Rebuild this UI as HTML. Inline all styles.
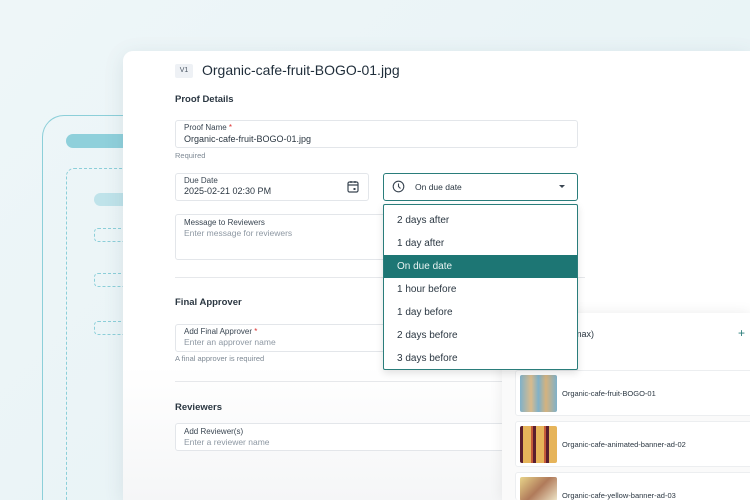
<!DOCTYPE html>
<html style="width:750px;height:500px;overflow:hidden"><head><style>
*{margin:0;padding:0;box-sizing:border-box}
body{width:750px;height:500px;overflow:hidden;position:relative;font-family:"Liberation Sans",sans-serif;background:linear-gradient(135deg,#eef6f8,#e6f2f5);color:#1f2d3a}
.a{position:absolute}
.card{left:123px;top:51px;width:627px;height:449px;background:linear-gradient(#fff 70%,#f5f6f7);border-radius:10px 0 0 0;box-shadow:0 4px 20px rgba(60,90,110,.12)}
.f{position:absolute;border:1px solid #e3e6ea;border-radius:3px;background:#fff}
.lb{position:absolute;font-size:8px;color:#3a4652}
.v{position:absolute;font-size:9px;color:#2b3742}
.ph{position:absolute;font-size:9px;color:#8e98a3}
.h{position:absolute;font-size:10.5px;font-weight:bold;color:#2b3742}
.hint{position:absolute;font-size:7.5px;color:#7f8a95}
.req{color:#d33}
.dd div{height:23px;line-height:23px;padding-left:13px;font-size:10px;color:#2b3742}
.row{position:absolute;left:515px;width:240px;height:46px;border:1px solid #eceef0;border-radius:3px;background:#fff}
.row .t{position:absolute;left:4px;top:4px;width:37px;height:37px;border-radius:2px}
.row span{position:absolute;left:46px;top:18px;font-size:7.5px;color:#2b3742}
</style></head><body>
<div class="a" style="left:42px;top:115px;width:200px;height:385px;border:1px solid #8ccfd9;border-bottom:none;border-radius:22px 22px 0 0"></div>
<div class="a" style="left:66px;top:134px;width:80px;height:14px;background:#8fd0db;border-radius:7px"></div>
<div class="a" style="left:66px;top:168px;width:100px;height:332px;border:1px dashed #8ccfd9;border-bottom:none;border-radius:8px 8px 0 0"></div>
<div class="a" style="left:94px;top:193px;width:60px;height:13px;background:#bfe3ea;border-radius:7px"></div>
<div class="a" style="left:94px;top:228px;width:40px;height:14px;border:1px dashed #8ccfd9;border-radius:4px"></div>
<div class="a" style="left:94px;top:273px;width:40px;height:14px;border:1px dashed #8ccfd9;border-radius:4px"></div>
<div class="a" style="left:94px;top:321px;width:40px;height:14px;border:1px dashed #8ccfd9;border-radius:4px"></div>

<div class="a card"></div>
<div class="a" style="left:175px;top:64px;width:18px;height:14px;background:#eef1f5;border-radius:2px;font-size:7px;line-height:14px;text-align:center;color:#4a5663">V1</div>
<div class="a" style="left:202px;top:62px;font-size:14px;color:#1f2d3a">Organic-cafe-fruit-BOGO-01.jpg</div>
<div class="h" style="left:175px;top:94px;font-size:9.5px">Proof Details</div>

<div class="f" style="left:175px;top:120px;width:403px;height:28px"></div>
<div class="lb" style="left:184px;top:123px">Proof Name <span class="req">*</span></div>
<div class="v" style="left:184px;top:134px">Organic-cafe-fruit-BOGO-01.jpg</div>
<div class="hint" style="left:175px;top:151px">Required</div>

<div class="f" style="left:175px;top:173px;width:194px;height:28px"></div>
<div class="lb" style="left:184px;top:176px">Due Date</div>
<div class="v" style="left:184px;top:186px">2025-02-21 02:30 PM</div>
<svg class="a" style="left:347px;top:180px" width="12" height="13" viewBox="0 0 12 13"><rect x="1" y="2" width="10" height="10" rx="1.5" fill="none" stroke="#3a4652" stroke-width="1.2"/><path d="M1 5h10M4 1v2M8 1v2" stroke="#3a4652" stroke-width="1.2"/><rect x="6.5" y="8" width="2" height="2" fill="#3a4652"/></svg>

<div class="f" style="left:383px;top:173px;width:195px;height:28px;border:1.5px solid #2a7d7b"></div>
<svg class="a" style="left:392px;top:180px" width="13" height="13" viewBox="0 0 13 13"><circle cx="6.5" cy="6.5" r="5.3" fill="none" stroke="#3a4652" stroke-width="1.1"/><path d="M6.5 3.5v3l2 2" fill="none" stroke="#3a4652" stroke-width="1.1"/></svg>
<div class="v" style="left:415px;top:182px;font-size:8.5px">On due date</div>
<div class="a" style="left:559px;top:185px;border-left:3px solid transparent;border-right:3px solid transparent;border-top:3px solid #3a4652"></div>

<div class="f" style="left:175px;top:214px;width:220px;height:46px"></div>
<div class="lb" style="left:184px;top:218px">Message to Reviewers</div>
<div class="ph" style="left:184px;top:228px;font-size:8.5px">Enter message for reviewers</div>

<div class="a" style="left:175px;top:277px;width:410px;height:1px;background:#e6e8eb"></div>
<div class="h" style="left:175px;top:297px;font-size:9.5px">Final Approver</div>
<div class="f" style="left:175px;top:324px;width:220px;height:28px"></div>
<div class="lb" style="left:184px;top:327px">Add Final Approver <span class="req">*</span></div>
<div class="ph" style="left:184px;top:337px;font-size:8.5px">Enter an approver name</div>
<div class="hint" style="left:175px;top:354px">A final approver is required</div>
<div class="a" style="left:175px;top:381px;width:340px;height:1px;background:#e6e8eb"></div>
<div class="h" style="left:175px;top:402px;font-size:9.5px">Reviewers</div>
<div class="f" style="left:175px;top:423px;width:340px;height:28px"></div>
<div class="lb" style="left:184px;top:427px">Add Reviewer(s)</div>
<div class="ph" style="left:184px;top:437px;font-size:8.5px">Enter a reviewer name</div>

<div class="a" style="left:502px;top:313px;width:248px;height:187px;background:#fafafa;box-shadow:0 0 14px rgba(0,0,0,.08);border-radius:4px 0 0 0"></div>
<div class="a" style="left:514px;top:313px;width:236px;height:57px;background:#fff"></div>
<div class="a" style="left:574px;top:329px;font-size:9px;color:#2b3742">max)</div>
<div class="a" style="left:738px;top:326px;font-size:12px;color:#2a7d7b">+</div>
<div class="row" style="top:370px"><div class="t" style="background:linear-gradient(90deg,#7fb1c9,#d9bb8c 30%,#7fb1c9 50%,#d5b27e 70%,#7fb1c9)"></div><span>Organic-cafe-fruit-BOGO-01</span></div>
<div class="row" style="top:421px"><div class="t" style="background:repeating-linear-gradient(90deg,#5a1e2e 0 3px,#e6b45a 3px 11px,#c45a3a 11px 13px)"></div><span>Organic-cafe-animated-banner-ad-02</span></div>
<div class="row" style="top:472px;height:28px;border-bottom:none"><div class="t" style="height:24px;background:linear-gradient(135deg,#e8d48a,#b07a5a 50%,#efe6c8)"></div><span>Organic-cafe-yellow-banner-ad-03</span></div>

<div class="a dd" style="left:383px;top:204px;width:195px;height:166px;background:#fff;border:1.5px solid #2a7d7b;border-radius:2px;box-shadow:0 3px 8px rgba(0,0,0,.12);padding-top:4px">
<div>2 days after</div><div>1 day after</div><div style="background:#1d7674;color:#e9f4f3">On due date</div><div>1 hour before</div><div>1 day before</div><div>2 days before</div><div>3 days before</div>
</div>
</body></html>
